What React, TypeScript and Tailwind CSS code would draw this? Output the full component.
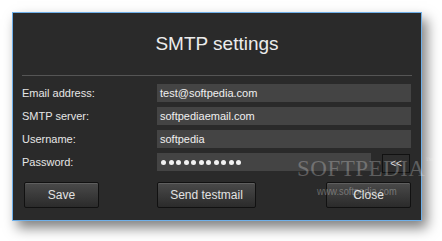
import React from 'react';

// --- Form data ---
const FIELDS = [
    { label: "Email address:", value: "test@softpedia.com" },
    { label: "SMTP server:", value: "softpediaemail.com" },
    { label: "Username:", value: "softpedia" },
];

const btn =
    "h-[26px] rounded-[2px] border border-[#111] bg-gradient-to-b from-[#4a4a4a] to-[#2b2b2b] text-[12px] text-[#e2e2e2] shadow-[inset_0_1px_0_rgba(255,255,255,0.12)] flex items-center justify-center";

export default function App() {
    return (
        <div className="w-[442px] h-[241px] bg-white pt-[12px] pl-[12px] font-['Liberation_Sans',Arial,sans-serif]">
            <div className="relative w-[410px] h-[209px] bg-[#2a2a2a] border border-[#6fb0ea] shadow-[5px_7px_12px_rgba(0,0,0,0.5)] pl-[9px] pr-[9px] pt-[19px]">
                {/* Title */}
                <div className="h-[24px] leading-[24px] text-center text-[19px] text-[#ececec]">SMTP settings</div>
                <div className="mt-[19px] h-px bg-[#555]" />

                {/* Rows */}
                <div className="mt-[8px] flex flex-col gap-[5px]">
                    {FIELDS.map(f => (
                        <div key={f.label} className="flex items-center h-[18px]">
                            <div className="w-[135px] text-[11px] text-[#e6e6e6]">{f.label}</div>
                            <div className="w-[254px] h-[18px] bg-[#444] pl-[3px] text-[11px] leading-[18px] text-[#f0f0f0]">{f.value}</div>
                        </div>
                    ))}
                    <div className="flex items-center h-[18px]">
                        <div className="w-[135px] text-[11px] text-[#e6e6e6]">Password:</div>
                        <div className="w-[214px] h-[18px] bg-[#444] pl-[4px] flex items-center gap-[2.5px]">
                            {Array.from({ length: 11 }).map((_, i) => (
                                <span key={i} className="w-[5px] h-[5px] rounded-full bg-[#f2f2f2]" />
                            ))}
                        </div>
                        <div className="ml-[11px] w-[28px] h-[19px] mt-[2px] border border-[#111] bg-[#2d2d2d] text-[10px] text-[#ddd] flex items-center justify-center">&lt;&lt;</div>
                    </div>
                </div>

                {/* Buttons */}
                <div className="mt-[11px] flex">
                    <div className={`${btn} ml-[2px] w-[75px]`}>Save</div>
                    <div className={`${btn} ml-[58px] w-[99px]`}>Send testmail</div>
                    <div className={`${btn} ml-[70px] w-[85px]`}>Close</div>
                </div>

                {/* Watermark */}
                <div className="absolute left-[284px] top-[144px] text-[23px] leading-none text-white/25 font-['Liberation_Serif',serif] tracking-[0.5px] pointer-events-none">
                    SOFTPEDIA<span className="text-[8px] align-top">™</span>
                </div>
                <div className="absolute left-[304px] top-[173px] text-[11px] leading-none text-white/30 scale-x-[0.84] origin-left pointer-events-none">
                    www.softpedia.com
                </div>
            </div>
        </div>
    );
}
